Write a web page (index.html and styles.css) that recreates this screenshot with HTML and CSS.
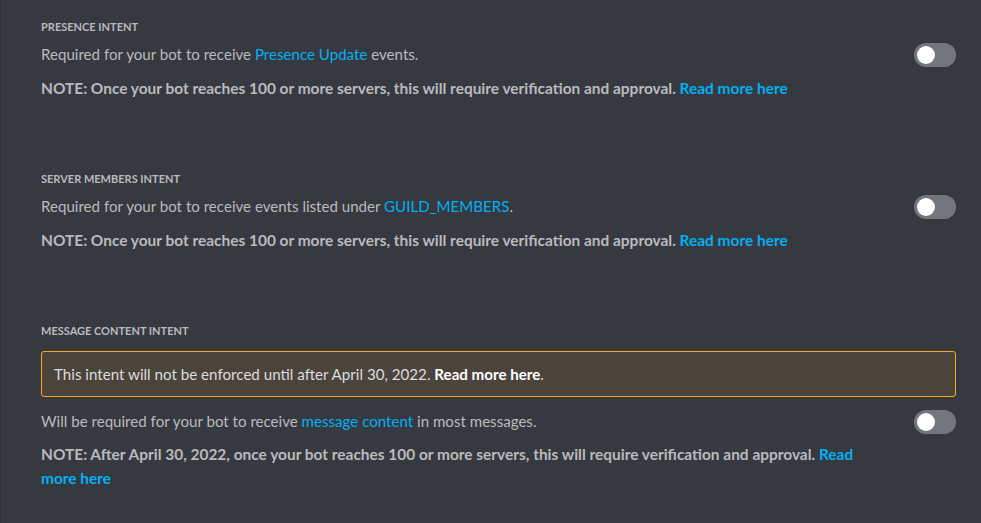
FILE: index.html
```html
<!DOCTYPE html>
<html>
<head>
<meta charset="utf-8">
<link rel="stylesheet" href="styles.css">
</head>
<body>
<main class="page">
  <section class="intent">
    <h3 class="label">Presence Intent</h3>
    <div class="row">
      <div class="text">
        <p class="desc">Required for your bot to receive <a class="link">Presence Update</a> events.</p>
        <p class="note">NOTE: Once your bot reaches 100 or more servers, this will require verification and approval. <a class="link">Read more here</a></p>
      </div>
      <span class="toggle"><span class="knob"></span></span>
    </div>
  </section>
  <section class="intent">
    <h3 class="label">Server Members Intent</h3>
    <div class="row">
      <div class="text">
        <p class="desc">Required for your bot to receive events listed under <a class="link">GUILD_MEMBERS</a>.</p>
        <p class="note">NOTE: Once your bot reaches 100 or more servers, this will require verification and approval. <a class="link">Read more here</a></p>
      </div>
      <span class="toggle"><span class="knob"></span></span>
    </div>
  </section>
  <section class="intent">
    <h3 class="label">Message Content Intent</h3>
    <div class="notice">This intent will not be enforced until after April 30, 2022. <strong>Read more here</strong>.</div>
    <div class="row">
      <div class="text">
        <p class="desc">Will be required for your bot to receive <a class="link">message content</a> in most messages.</p>
        <p class="note note-tight">NOTE: After April 30, 2022, once your bot reaches 100 or more servers, this will require verification and approval. <a class="link">Read more here</a></p>
      </div>
      <span class="toggle"><span class="knob"></span></span>
    </div>
  </section>
</main>
</body>
</html>
```
FILE: styles.css
```css
html, body {
  margin: 0;
  padding: 0;
  background: #36393f;
}
body {
  font-family: Lato, "Open Sans", sans-serif;
  color: #b9bbbe;
  height: 523px;
  overflow: hidden;
  border-left: 1px solid #2f3136;
  box-sizing: border-box;
}
.page {
  padding: 19px 25px 0 40px;
  display: flex;
  flex-direction: column;
  gap: 71px;
}
.intent {
  display: flex;
  flex-direction: column;
}
.label {
  margin: 0 0 7px;
  font-size: 11px;
  line-height: 16px;
  font-weight: 700;
  text-transform: uppercase;
  color: #b9bbbe;
}
.row {
  display: flex;
  align-items: flex-start;
  justify-content: space-between;
}
.text {
  max-width: 840px;
}
.desc {
  margin: 0;
  font-size: 15.1px;
  line-height: 24px;
  color: #b9bbbe;
}
.note {
  margin: 10px 0 0;
  font-size: 15.45px;
  line-height: 24px;
  font-weight: 700;
  color: #b9bbbe;
}
.note-tight {
  margin-top: 9px;
}
.link {
  color: #00b0f4;
  text-decoration: none;
}
.toggle {
  flex: none;
  width: 42px;
  height: 24px;
  border-radius: 12px;
  background: #72767d;
  display: flex;
  align-items: center;
  padding: 0 3px;
  box-sizing: border-box;
  margin-top: 1px;
}
.knob {
  width: 18px;
  height: 18px;
  border-radius: 50%;
  background: #fff;
}
.notice {
  margin: 5px 0 12px;
  height: 46px;
  box-sizing: border-box;
  border: 1px solid #faa81a;
  border-radius: 3px;
  background: #4b443d;
  color: #dcddde;
  font-size: 15.15px;
  line-height: 24px;
  padding: 10px 12px;
}
.notice strong {
  color: #fff;
  font-weight: 700;
}
```
